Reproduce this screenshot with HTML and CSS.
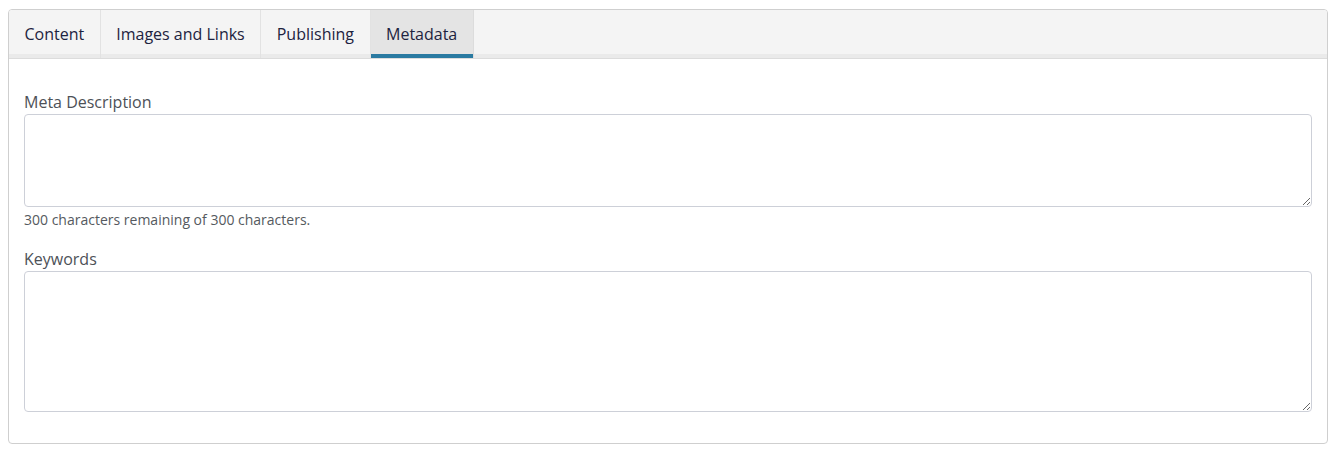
FILE: index.html
```html
<!DOCTYPE html>
<html lang="en">
<head>
<meta charset="utf-8">
<title>Metadata</title>
<link rel="stylesheet" href="styles.css">
</head>
<body>
<div class="card">
  <div class="tabs">
    <button class="tab">Content</button>
    <button class="tab">Images and Links</button>
    <button class="tab">Publishing</button>
    <button class="tab active">Metadata</button>
  </div>
  <div class="panel">
    <div class="field">
      <label class="label" for="metadesc">Meta Description</label>
      <textarea id="metadesc" class="input desc"></textarea>
      <div class="help">300 characters remaining of 300 characters.</div>
    </div>
    <div class="field">
      <label class="label" for="metakey">Keywords</label>
      <textarea id="metakey" class="input keys"></textarea>
    </div>
  </div>
</div>
</body>
</html>
```

FILE: styles.css
```css
html, body {
  margin: 0;
  padding: 0;
  background: #fff;
}
body {
  font-family: "Open Sans", "Noto Sans", sans-serif;
  color: #22262a;
}
.card {
  margin: 9px 9px 0 8px;
  border: 1px solid #cfcfcf;
  border-radius: 4px;
  overflow: hidden;
  height: 435px;
  box-sizing: border-box;
}
.tabs {
  display: flex;
  background: #f4f4f4;
  border-bottom: 1px solid #dcdcdc;
  box-shadow: inset 0 -4px 0 #eaeaea;
}
.tab {
  font-family: inherit;
  font-size: 16px;
  color: #1d2340;
  background: transparent;
  border: 0;
  border-right: 1px solid #e2e2e2;
  height: 48px;
  padding: 0 15.5px 0;
  margin: 0;
  cursor: pointer;
}
.tab.active {
  background: #e4e4e4;
  box-shadow: inset 0 -4px 0 #2a7aa1;
  border-right-color: #dcdcdc;
}
.panel {
  padding: 31px 15px 0 15px;
}
.field {
  display: flex;
  flex-direction: column;
}
.field + .field {
  margin-top: 17px;
}
.label {
  font-size: 16px;
  line-height: 24px;
  color: #4d5157;
}
.input {
  box-sizing: border-box;
  width: 100%;
  border: 1px solid #cdd0d8;
  border-radius: 4px;
  margin: 0;
  font-family: inherit;
  font-size: 14px;
  resize: vertical;
}
.desc { height: 93px; }
.keys { height: 141px; }
.help {
  font-size: 14px;
  line-height: 21px;
  margin-top: 2px;
  color: #555a60;
}
```
